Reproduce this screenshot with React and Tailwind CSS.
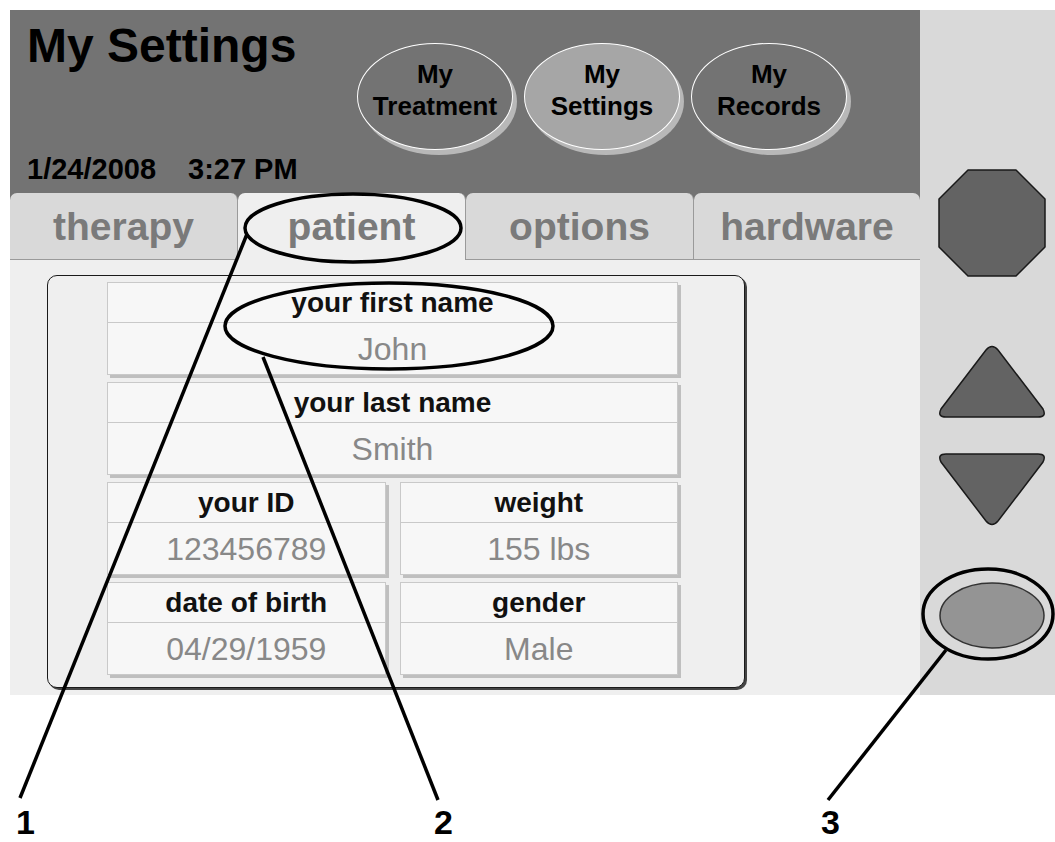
const font = { fontFamily: '"Liberation Sans", Arial, sans-serif' };

function NavOval({ label, active }) {
  return (
    <div
      className={`w-[156px] h-[107px] rounded-[50%] border border-white shadow-[4px_5px_0_#b8b8b8] flex flex-col items-center justify-center pb-[14px] text-[26px] leading-[32px] font-bold text-black ${
        active ? "bg-[#a6a6a6]" : "bg-[#737373]"
      }`}
    >
      <span>My</span>
      <span>{label}</span>
    </div>
  );
}

function Tab({ label, active, last }) {
  return (
    <div
      className={`h-[67px] flex items-center justify-center rounded-t-[7px] border-[#9a9a9a] text-[39px] leading-none font-bold text-[#7a7a7a] ${
        last ? "w-[226px]" : "w-[228px] border-r"
      } ${active ? "bg-[#efefef]" : "bg-[#d9d9d9] border-b"}`}
    >
      {label}
    </div>
  );
}

function Field({ label, value, wide }) {
  return (
    <div
      className={`h-[93px] flex flex-col bg-[#f7f7f7] border border-[#c9c9c9] shadow-[3px_3px_0_#bfbfbf] ${
        wide ? "col-span-2" : ""
      }`}
    >
      <div className="h-[40px] flex items-center justify-center border-b border-[#c9c9c9] text-[28px] leading-none font-bold text-[#111]">
        {label}
      </div>
      <div className="flex-1 flex items-center justify-center text-[32px] leading-none text-[#888]">
        {value}
      </div>
    </div>
  );
}

function Octagon() {
  return (
    <svg width="108" height="108" viewBox="-1 -1 108 108">
      <polygon
        points="29,0 77,0 106,29 106,77 77,106 29,106 0,77 0,29"
        fill="#636363"
        stroke="#1a1a1a"
        strokeWidth="1.5"
        strokeLinejoin="round"
      />
    </svg>
  );
}

function TriangleUp() {
  return (
    <svg width="110" height="75" viewBox="-2 -2 110 75">
      <path
        d="M47 4 Q53 -3 59 4 L104 63 Q108 71 99 71 L7 71 Q-2 71 2 63 Z"
        fill="#636363"
        stroke="#1a1a1a"
        strokeWidth="1.5"
      />
    </svg>
  );
}

function TriangleDown() {
  return (
    <svg width="110" height="75" viewBox="-2 -2 110 75">
      <path
        d="M7 0 L99 0 Q108 0 104 8 L59 67 Q53 74 47 67 L2 8 Q-2 0 7 0 Z"
        fill="#636363"
        stroke="#1a1a1a"
        strokeWidth="1.5"
      />
    </svg>
  );
}

function Annotations() {
  return (
    <div className="absolute inset-0 pointer-events-none">
      <svg width="1055" height="842" className="absolute left-0 top-0">
        <g fill="none" stroke="#000" strokeWidth="3.5">
          <ellipse cx="353" cy="228" rx="108" ry="34" />
          <ellipse cx="389" cy="326" rx="164" ry="43" />
          <ellipse cx="988" cy="614" rx="65" ry="45" />
          <line x1="247" y1="234" x2="20" y2="798" />
          <line x1="263" y1="357" x2="438" y2="800" />
          <line x1="946" y1="650" x2="828" y2="800" />
        </g>
      </svg>
      <div className="absolute left-[16px] top-[805px] text-[34px] leading-none font-bold text-black">1</div>
      <div className="absolute left-[434px] top-[805px] text-[34px] leading-none font-bold text-black">2</div>
      <div className="absolute left-[821px] top-[805px] text-[34px] leading-none font-bold text-black">3</div>
    </div>
  );
}

export default function App() {
  return (
    <div className="relative w-[1055px] h-[842px] bg-white overflow-hidden" style={font}>
      <div className="flex pt-[10px] pl-[10px]">
        <div className="w-[910px] h-[685px] flex flex-col">
          {/* header */}
          <div className="h-[183px] bg-[#737373] flex">
            <div className="w-[347px] flex flex-col justify-between pl-[17px] pt-[12px] pb-[9px]">
              <div className="text-[48px] leading-none font-bold text-black">My Settings</div>
              <div className="text-[29px] leading-none font-bold text-black flex">
                <span>1/24/2008</span>
                <span className="ml-[32px]">3:27 PM</span>
              </div>
            </div>
            <div className="flex gap-[11px] mt-[33px] h-[107px]">
              <NavOval label="Treatment" />
              <NavOval label="Settings" active />
              <NavOval label="Records" />
            </div>
          </div>

          {/* tabs */}
          <div className="flex bg-[#737373]">
            <Tab label="therapy" />
            <Tab label="patient" active />
            <Tab label="options" />
            <Tab label="hardware" last />
          </div>

          {/* content */}
          <div className="flex-1 bg-[#efefef] pl-[37px] pt-[15px]">
            <div className="w-[698px] h-[413px] rounded-[10px] border border-[#1a1a1a] shadow-[2px_2px_0_#444] bg-[#efefef] pl-[59px] pt-[6px]">
              <div className="w-[571px] grid grid-cols-2 gap-x-[14px] gap-y-[7px]">
                <Field label="your first name" value="John" wide />
                <Field label="your last name" value="Smith" wide />
                <Field label="your ID" value="123456789" />
                <Field label="weight" value="155 lbs" />
                <Field label="date of birth" value="04/29/1959" />
                <Field label="gender" value="Male" />
              </div>
            </div>
          </div>
        </div>

        {/* right control column */}
        <div className="w-[135px] h-[685px] bg-[#d9d9d9] flex flex-col items-center pl-[9px] pt-[159px]">
          <Octagon />
          <div className="mt-[67px]">
            <TriangleUp />
          </div>
          <div className="mt-[33px]">
            <TriangleDown />
          </div>
          <div className="mt-[54px]">
            <svg width="108" height="70" viewBox="-1.5 -1.5 108 70">
              <ellipse cx="52.5" cy="33" rx="52" ry="32.5" fill="#949494" stroke="#333" strokeWidth="1.5" />
            </svg>
          </div>
        </div>
      </div>
      <Annotations />
    </div>
  );
}
